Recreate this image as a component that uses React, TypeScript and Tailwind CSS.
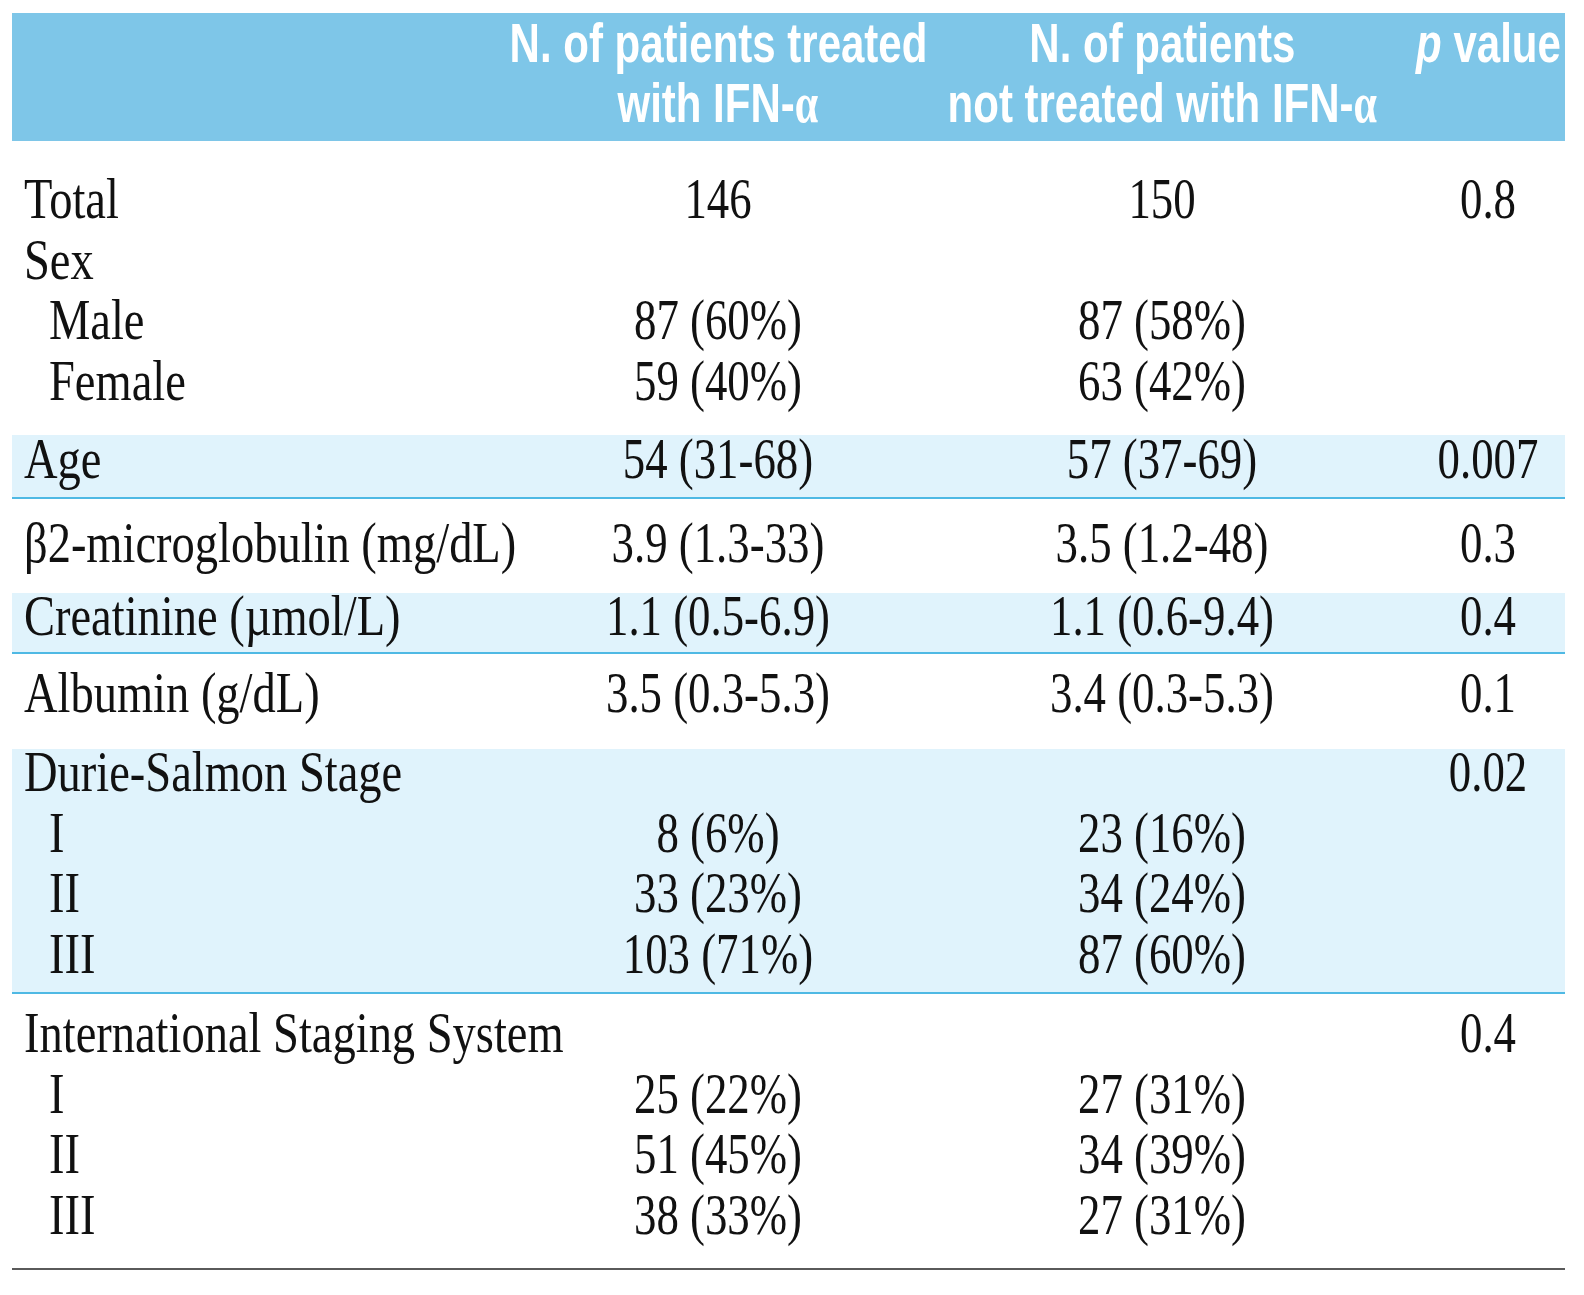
import React from 'react';

type Row = {
  label: string;
  a?: string;
  b?: string;
  p?: string;
  sub?: boolean;
};

const cols = 'grid grid-cols-[511px_390px_498px_154px]';

function DataRow({ row, first }: { row: Row; first?: string }) {
  return (
    <div className={`${cols} h-[60.7px] leading-[60.7px] shrink-0 ${first ?? ''}`}>
      <div className={`flex ${row.sub ? 'pl-[37px]' : 'pl-[12px]'}`}>
        <span className="inline-block whitespace-nowrap origin-left scale-x-[0.83]">{row.label}</span>
      </div>
      {[row.a, row.b, row.p].map((v, i) => (
        <div key={i} className="flex justify-center">
          <span className="inline-block whitespace-nowrap origin-center scale-x-[0.8]">{v ?? ''}</span>
        </div>
      ))}
    </div>
  );
}

function HeadText({ children }: { children: React.ReactNode }) {
  return (
    <div className="flex justify-center h-[60px]">
      <span className="inline-block whitespace-nowrap origin-center scale-x-[0.75]">{children}</span>
    </div>
  );
}

const alpha = <span className="font-['Liberation_Serif',serif]">α</span>;

export default function App() {
  const general: Row[] = [
    { label: 'Total', a: '146', b: '150', p: '0.8' },
    { label: 'Sex' },
    { label: 'Male', a: '87 (60%)', b: '87 (58%)', sub: true },
    { label: 'Female', a: '59 (40%)', b: '63 (42%)', sub: true },
  ];
  const durie: Row[] = [
    { label: 'Durie-Salmon Stage', p: '0.02' },
    { label: 'I', a: '8 (6%)', b: '23 (16%)', sub: true },
    { label: 'II', a: '33 (23%)', b: '34 (24%)', sub: true },
    { label: 'III', a: '103 (71%)', b: '87 (60%)', sub: true },
  ];
  const iss: Row[] = [
    { label: 'International Staging System', p: '0.4' },
    { label: 'I', a: '25 (22%)', b: '27 (31%)', sub: true },
    { label: 'II', a: '51 (45%)', b: '34 (39%)', sub: true },
    { label: 'III', a: '38 (33%)', b: '27 (31%)', sub: true },
  ];

  return (
    <div className="min-h-[1295px] bg-white pt-[13px] px-[12px]">
      <div className="w-[1553px]">
        {/* header */}
        <div className={`${cols} h-[128px] bg-[#7ec6e8] text-white font-bold text-[56px] leading-[60px] font-['Liberation_Sans',sans-serif]`}>
          <div />
          <div className="flex flex-col">
            <HeadText>N. of patients treated</HeadText>
            <HeadText>with IFN-{alpha}</HeadText>
          </div>
          <div className="flex flex-col">
            <HeadText>N. of patients</HeadText>
            <HeadText>not treated with IFN-{alpha}</HeadText>
          </div>
          <div className="flex flex-col">
            <HeadText>
              <i>p</i> value
            </HeadText>
          </div>
        </div>

        {/* body */}
        <div className="text-[56px] text-[#111] font-['Liberation_Serif',serif]">
          <div className="flex flex-col h-[294px] pt-[28px]">
            {general.map((r, i) => (
              <DataRow key={i} row={r} />
            ))}
          </div>

          <div className="flex flex-col h-[64px] bg-[#e0f3fc] border-b-2 border-[#4fb9e4]">
            <DataRow row={{ label: 'Age', a: '54 (31-68)', b: '57 (37-69)', p: '0.007' }} first="-mt-[6px]" />
          </div>

          <div className="flex flex-col h-[94px] pt-[14px]">
            <DataRow row={{ label: 'β2-microglobulin (mg/dL)', a: '3.9 (1.3-33)', b: '3.5 (1.2-48)', p: '0.3' }} />
          </div>

          <div className="flex flex-col h-[61px] bg-[#e0f3fc] border-b-2 border-[#4fb9e4]">
            <DataRow row={{ label: 'Creatinine (µmol/L)', a: '1.1 (0.5-6.9)', b: '1.1 (0.6-9.4)', p: '0.4' }} first="-mt-[7px]" />
          </div>

          <div className="flex flex-col h-[95px] pt-[9px]">
            <DataRow row={{ label: 'Albumin (g/dL)', a: '3.5 (0.3-5.3)', b: '3.4 (0.3-5.3)', p: '0.1' }} />
          </div>

          <div className="flex flex-col h-[245px] bg-[#e0f3fc] border-b-2 border-[#4fb9e4]">
            {durie.map((r, i) => (
              <DataRow key={i} row={r} first={i === 0 ? '-mt-[7px]' : ''} />
            ))}
          </div>

          <div className="flex flex-col h-[276px] pt-[9px] border-b-2 border-[#5a5a5a]">
            {iss.map((r, i) => (
              <DataRow key={i} row={r} />
            ))}
          </div>
        </div>
      </div>
    </div>
  );
}
